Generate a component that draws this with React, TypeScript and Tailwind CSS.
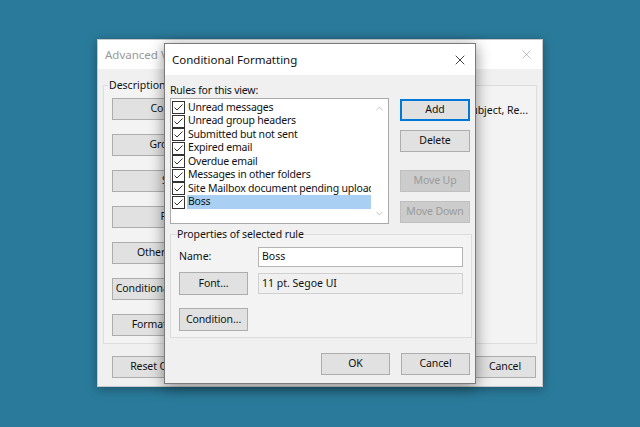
import { X, ChevronUp, ChevronDown } from 'lucide-react';

const rules = [
  'Unread messages',
  'Unread group headers',
  'Submitted but not sent',
  'Expired email',
  'Overdue email',
  'Messages in other folders',
  'Site Mailbox document pending upload',
  'Boss',
];

const backButtons = [
  'Columns...',
  'Group By...',
  'Sort...',
  'Filter...',
  'Other Settings...',
  'Conditional Formatting...',
  'Format Columns...',
];

function Checkbox() {
  return (
    <span className="flex h-[13px] w-[13px] shrink-0 items-center justify-center border border-[#333] bg-white">
      <svg width="11" height="11" viewBox="0 0 11 11">
        <polyline points="1.5,5.5 4,8 9.5,2.5" fill="none" stroke="#333" strokeWidth="1" />
      </svg>
    </span>
  );
}

function WinButton({
  children,
  className = '',
  disabled = false,
  primary = false,
}: {
  children: React.ReactNode;
  className?: string;
  disabled?: boolean;
  primary?: boolean;
}) {
  let tone = 'bg-[#e1e1e1] border-[#adadad] text-[#111]';
  if (disabled) tone = 'bg-[#cccccc] border-[#bfbfbf] text-[#9a9a9a]';
  if (primary) tone = 'bg-[#e1e1e1] border-[#0078d7] text-[#111] shadow-[inset_0_0_0_1px_#0078d7]';
  return (
    <div
      className={`flex h-[22px] items-center justify-center overflow-hidden whitespace-nowrap border text-[10.5px] tracking-[-0.1px] ${tone} ${className}`}
    >
      {children}
    </div>
  );
}

function BackDialog() {
  return (
    <div className="absolute left-[97px] top-[39px] flex h-[348px] w-[446px] flex-col border border-[#c8c8c8] bg-[#f0f0f0] shadow-[0_2px_10px_rgba(0,0,0,0.35)]">
      <div className="flex h-[29px] items-center justify-between bg-white pl-[7px] pr-[8px]">
        <span className="text-[11.5px] text-[#999]">Advanced View Settings: Compact</span>
        <X className="h-[15px] w-[15px] text-[#999]" strokeWidth={1} />
      </div>
      <div className="flex flex-1 flex-col px-[5px] pt-[9px]">
        <fieldset className="h-[266px] border border-[#dcdcdc] bg-[#f3f3f3] px-[8px]">
          <legend className="-ml-[4px] px-[1px] text-[10.5px] leading-[14px] text-[#111]">Description</legend>
          <div className="flex flex-col gap-[14px] pt-[6px]">
            {backButtons.map((label, i) => (
              <div key={label} className="flex items-center gap-[10px]">
                <WinButton className="w-[128px] shrink-0">{label}</WinButton>
                {i === 0 && (
                  <div className="flex min-w-0 flex-1 justify-end pr-0 pt-[3px]">
                    <span className="whitespace-nowrap text-[10.5px] text-[#111]">
                      Icon, Attachment, From, Subject, Re...
                    </span>
                  </div>
                )}
              </div>
            ))}
          </div>
        </fieldset>
        <div className="flex items-center justify-between pl-[9px] pr-[1px] pt-[12px]">
          <WinButton className="w-[128px]">Reset Current View</WinButton>
          <div className="flex gap-[10px]">
            <WinButton className="w-[61px]">OK</WinButton>
            <WinButton className="w-[62px]">Cancel</WinButton>
          </div>
        </div>
      </div>
    </div>
  );
}

function FrontDialog() {
  return (
    <div className="absolute left-[164px] top-[43px] flex h-[341px] w-[312px] flex-col border border-[#7a7a7a] bg-[#f0f0f0] shadow-[0_3px_14px_rgba(0,0,0,0.45)]">
      <div className="flex h-[31px] items-center justify-between bg-white pl-[7px] pr-[7px]">
        <span className="text-[11.5px] text-[#111]">Conditional Formatting</span>
        <X className="h-[16px] w-[16px] text-[#111]" strokeWidth={1.2} />
      </div>
      <div className="flex flex-1 flex-col px-[5px]">
        <div className="pt-[8px] text-[10.5px] leading-[14px] tracking-[-0.2px] text-[#111]">Rules for this view:</div>
        <div className="mt-[1px] flex gap-[11px]">
          <div className="flex h-[126px] w-[219px] overflow-hidden border border-[#a9a9a9] bg-white">
            <div className="flex min-w-0 flex-1 flex-col pl-[1px] pt-[2px]">
              {rules.map((r) => (
                <div key={r} className="flex h-[13.5px] items-center gap-[2px]">
                  <Checkbox />
                  <span
                    className={`flex h-[14px] min-w-0 flex-1 items-center overflow-hidden whitespace-nowrap pl-[1px] text-[10.5px] tracking-[-0.2px] text-[#111] ${
                      r === 'Boss' ? 'bg-[#a9d0f2]' : ''
                    }`}
                  >
                    {r}
                  </span>
                </div>
              ))}
            </div>
            <div className="flex w-[17px] shrink-0 flex-col items-center justify-between py-[4px]">
              <ChevronUp className="h-[11px] w-[11px] text-[#a0a0a0]" strokeWidth={1.4} />
              <ChevronDown className="h-[11px] w-[11px] text-[#a0a0a0]" strokeWidth={1.4} />
            </div>
          </div>
          <div className="flex flex-col pt-[1px]">
            <WinButton primary className="w-[70px]">Add</WinButton>
            <WinButton className="mt-[9px] w-[70px]">Delete</WinButton>
            <WinButton disabled className="mt-[18px] w-[70px]">Move Up</WinButton>
            <WinButton disabled className="mt-[9px] w-[70px]">Move Down</WinButton>
          </div>
        </div>
        <fieldset className="mt-[3px] h-[111px] w-[302px] border border-[#dcdcdc] bg-[#f3f3f3] px-[8px]">
          <legend className="-ml-[2px] px-0 text-[10.5px] leading-[14px] tracking-[-0.1px] text-[#111]">
            Properties of selected rule
          </legend>
          <div className="flex flex-col pt-[6px]">
            <div className="flex items-center">
              <span className="w-[79px] text-[10.5px] text-[#111]">Name:</span>
              <div className="flex h-[20px] w-[205px] items-center border border-[#b4b4b4] bg-white pl-[3px] text-[10.5px] text-[#111]">
                Boss
              </div>
            </div>
            <div className="mt-[5px] flex items-center gap-[10px]">
              <WinButton className="h-[23px] w-[69px]">Font...</WinButton>
              <div className="flex h-[21px] w-[205px] items-center border border-[#d0d0d0] bg-[#f0f0f0] pl-[3px] text-[10.5px] text-[#111]">
                11 pt. Segoe UI
              </div>
            </div>
            <WinButton className="mt-[13px] h-[23px] w-[69px]">Condition...</WinButton>
          </div>
        </fieldset>
        <div className="mt-[15px] flex justify-end gap-[11px]">
          <WinButton className="w-[69px]">OK</WinButton>
          <WinButton className="w-[69px]">Cancel</WinButton>
        </div>
      </div>
    </div>
  );
}

export default function App() {
  return (
    <div className="relative h-[427px] w-[640px] overflow-hidden bg-[#2a7b9b] font-['Segoe_UI','Noto_Sans',sans-serif]">
      <BackDialog />
      <FrontDialog />
    </div>
  );
}
